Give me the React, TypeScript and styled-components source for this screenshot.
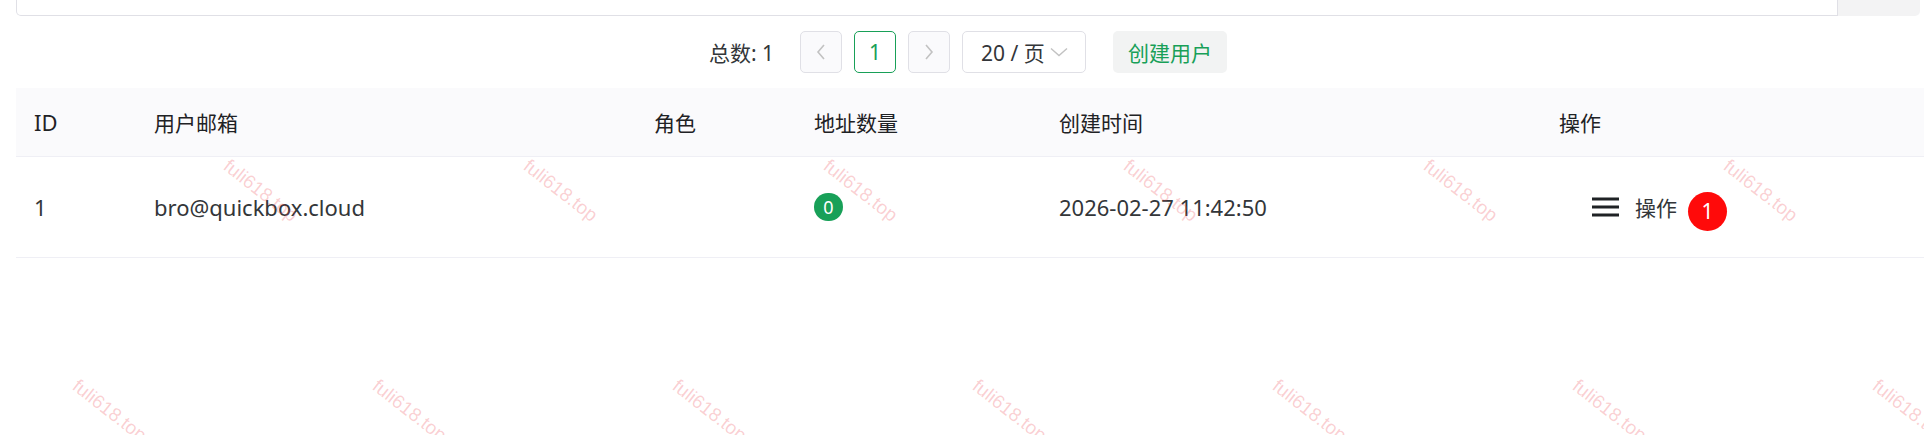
import React from "react";
import styled, { createGlobalStyle } from "styled-components";

const GlobalStyle = createGlobalStyle`
  html, body {
    margin: 0;
    padding: 0;
    background: #ffffff;
  }
  body {
    font-family: "Noto Sans", "Noto Sans CJK SC", sans-serif;
    font-size: 21px;
    color: #333639;
    overflow: hidden;
  }
`;

const Page = styled.div`
  position: relative;
  padding: 0 4px 0 16px;
  height: 435px;
  overflow: hidden;
  box-sizing: border-box;
`;

const InputGroup = styled.div`
  display: flex;
  height: 16px;
`;

const InputTail = styled.div`
  flex: 1;
  border: 1px solid #e0e0e6;
  border-top: none;
  border-radius: 0 0 0 5px;
`;

const InputButton = styled.div`
  width: 82px;
  background: #f3f3f4;
  border-radius: 0 0 5px 0;
`;

const Toolbar = styled.div`
  margin-top: 15px;
  height: 42px;
  display: flex;
  align-items: center;
  justify-content: center;
`;

const Pagination = styled.div`
  display: flex;
  align-items: center;
  gap: 12px;
`;

const Total = styled.span`
  color: #333639;
  margin-right: 14px;
`;

const PageItem = styled.div<{ $active?: boolean; $disabled?: boolean }>`
  box-sizing: border-box;
  width: 42px;
  height: 42px;
  display: flex;
  align-items: center;
  justify-content: center;
  border-radius: 5px;
  border: 1px solid ${(p) => (p.$active ? "#18a058" : "#e0e0e6")};
  background: ${(p) => (p.$disabled ? "#fafafc" : "#ffffff")};
  color: ${(p) => (p.$active ? "#18a058" : "#c2c2c2")};
`;

const SizeSelect = styled.div`
  box-sizing: border-box;
  width: 124px;
  height: 42px;
  display: flex;
  align-items: center;
  justify-content: space-between;
  padding: 0 17px 0 18px;
  border: 1px solid #e0e0e6;
  border-radius: 5px;
  color: #333639;
`;

const CreateButton = styled.div`
  margin-left: 27px;
  box-sizing: border-box;
  width: 114px;
  height: 42px;
  display: flex;
  align-items: center;
  justify-content: center;
  border-radius: 5px;
  background: #f2f3f3;
  color: #18a058;
`;

const Table = styled.div`
  margin-top: 15px;
  margin-right: -4px;
`;

const Row = styled.div<{ $head?: boolean }>`
  display: grid;
  grid-template-columns: 120px 500px 160px 245px 500px 1fr;
  height: ${(p) => (p.$head ? "68px" : "100px")};
  align-items: center;
  background: ${(p) => (p.$head ? "#fafafc" : "#ffffff")};
  border-bottom: 1px solid #efeff5;
  color: ${(p) => (p.$head ? "#1f2225" : "#333639")};
`;

const Cell = styled.div<{ $latin?: boolean }>`
  padding: 0 18px;
  display: flex;
  align-items: center;
  white-space: nowrap;
  font-size: ${(p) => (p.$latin ? "22px" : "21px")};
`;

const CountBadge = styled.span`
  width: 29px;
  height: 28px;
  border-radius: 14px;
  background: #18a058;
  color: #ffffff;
  font-size: 18px;
  display: inline-flex;
  align-items: center;
  justify-content: center;
`;

const ActionButton = styled.div`
  display: flex;
  align-items: center;
  margin-left: 33px;
  color: #333639;
`;

const MenuIcon = styled.svg`
  width: 27px;
  height: 20px;
  margin-right: 16px;
`;

const Dot = styled.span`
  position: relative;
  top: 4px;
  margin-left: 11px;
  width: 39px;
  height: 39px;
  border-radius: 50%;
  background: #ff0a0a;
  color: #ffffff;
  display: inline-flex;
  align-items: center;
  justify-content: center;
  font-size: 21px;
`;

const Overlay = styled.div`
  position: absolute;
  inset: 0;
  pointer-events: none;
`;

const Mark = styled.span`
  position: absolute;
  font-family: "Liberation Sans", "Noto Sans", sans-serif;
  font-size: 19px;
  line-height: 1;
  color: rgba(236, 70, 80, 0.26);
  transform: rotate(38deg);
  transform-origin: 0 0;
  white-space: nowrap;
`;

const ChevronLeft = () => (
  <svg width="10" height="16" viewBox="0 0 10 16">
    <path d="M8 1 L2 8 L8 15" fill="none" stroke="#c2c2c2" strokeWidth="1.6" />
  </svg>
);

const ChevronRight = () => (
  <svg width="10" height="16" viewBox="0 0 10 16">
    <path d="M2 1 L8 8 L2 15" fill="none" stroke="#c2c2c2" strokeWidth="1.6" />
  </svg>
);

const ChevronDown = () => (
  <svg width="18" height="10" viewBox="0 0 18 10">
    <path d="M1 1.5 L9 8.5 L17 1.5" fill="none" stroke="#c2c2c2" strokeWidth="1.4" />
  </svg>
);

const marks: { x: number; y: number }[] = [];
for (let k = 0; k < 7; k++) {
  marks.push({ x: 232 + 300 * k, y: 156 });
  marks.push({ x: 81 + 300 * k, y: 376 });
}

export default function App() {
  return (
    <>
      <GlobalStyle />
      <Page>
        <InputGroup>
          <InputTail />
          <InputButton />
        </InputGroup>
        <Toolbar>
          <Pagination>
            <Total>总数: 1</Total>
            <PageItem $disabled>
              <ChevronLeft />
            </PageItem>
            <PageItem $active>1</PageItem>
            <PageItem $disabled>
              <ChevronRight />
            </PageItem>
            <SizeSelect>
              <span>20 / 页</span>
              <ChevronDown />
            </SizeSelect>
          </Pagination>
          <CreateButton>创建用户</CreateButton>
        </Toolbar>
        <Table>
          <Row $head>
            <Cell $latin>ID</Cell>
            <Cell>用户邮箱</Cell>
            <Cell>角色</Cell>
            <Cell>地址数量</Cell>
            <Cell>创建时间</Cell>
            <Cell>操作</Cell>
          </Row>
          <Row>
            <Cell $latin>1</Cell>
            <Cell $latin>bro@quickbox.cloud</Cell>
            <Cell></Cell>
            <Cell>
              <CountBadge>0</CountBadge>
            </Cell>
            <Cell $latin>2026-02-27 11:42:50</Cell>
            <Cell>
              <ActionButton>
                <MenuIcon viewBox="0 0 27 20">
                  <path d="M0 2 H27 M0 10 H27 M0 18 H27" stroke="#1f2225" strokeWidth="3" />
                </MenuIcon>
                <span>操作</span>
                <Dot>1</Dot>
              </ActionButton>
            </Cell>
          </Row>
        </Table>
        <Overlay>
          {marks.map((m, i) => (
            <Mark key={i} style={{ left: m.x, top: m.y }}>
              fuli618.top
            </Mark>
          ))}
        </Overlay>
      </Page>
    </>
  );
}
